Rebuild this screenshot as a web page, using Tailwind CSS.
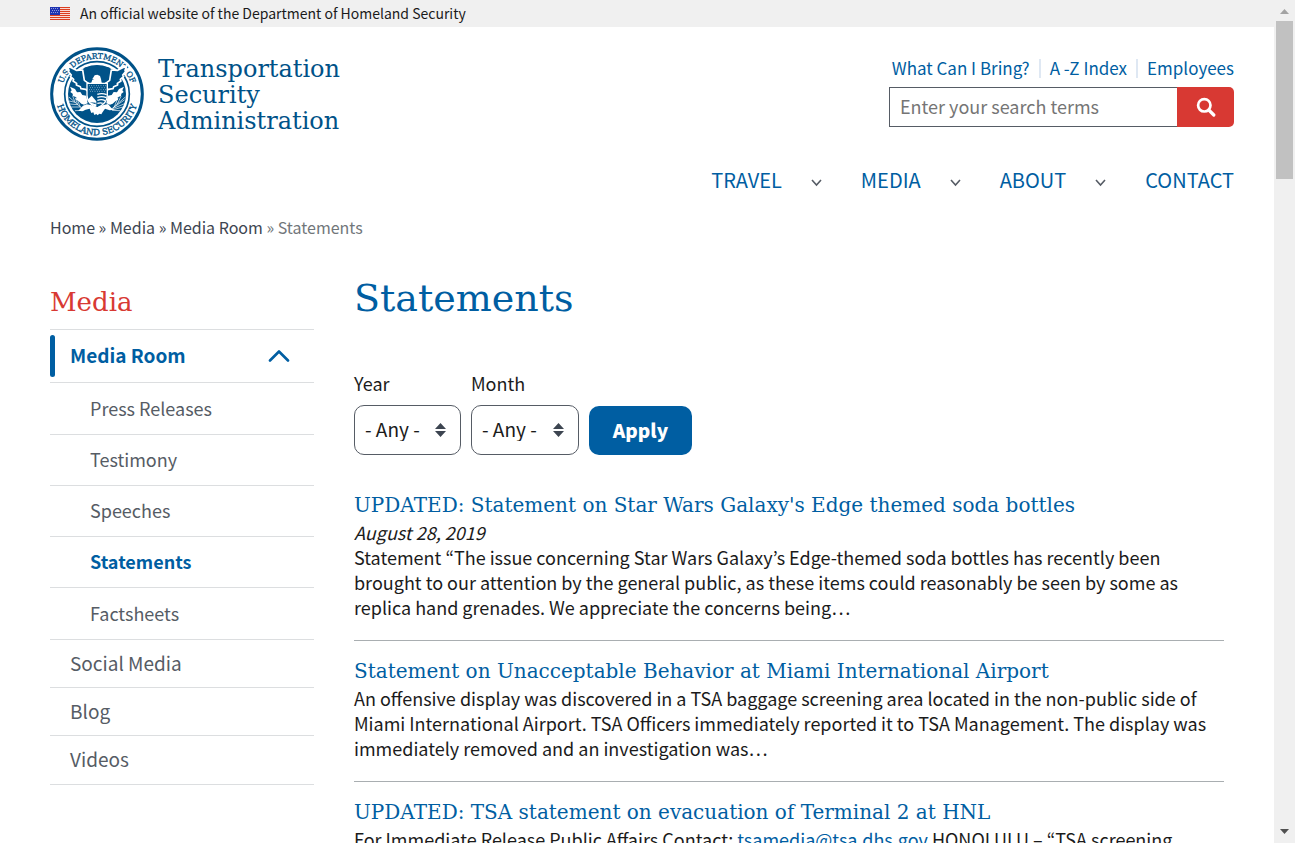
<!DOCTYPE html>
<html lang="en">
<head>
<meta charset="utf-8">
<meta name="viewport" content="width=device-width, initial-scale=1">
<title>Statements | Transportation Security Administration</title>
<script src="https://cdn.jsdelivr.net/npm/@tailwindcss/browser@4"></script>
</head>
<body class="flex h-screen overflow-hidden bg-white font-['Noto_Sans_CJK_KR','Open_Sans',sans-serif] text-[#1b1b1b]">
<div class="min-w-0 flex-1">
  <div class="flex h-[27px] items-center gap-[10px] bg-[#f0f0f0] pl-[50px] text-[14px] leading-[20px]">
    <svg class="h-[13px] w-5" viewBox="0 0 20 13" shape-rendering="crispEdges" aria-hidden="true">
      <path fill="#f9d9d3" d="M0 0h20v13H0z"/>
      <path fill="#db3e1f" d="M0 0h20v1H0zM0 2h20v1H0zM0 4h20v1H0zM0 6h20v1H0zM0 8h20v1H0zM0 10h20v1H0zM0 12h20v1H0z"/>
      <path fill="#1e33b1" d="M0 0h10v8H0z"/>
      <path fill="#8f99dc" d="M1 1h1v1H1zM3 1h1v1H3zM5 1h1v1H5zM7 1h1v1H7zM2 3h1v1H2zM4 3h1v1H4zM6 3h1v1H6zM8 3h1v1H8zM1 5h1v1H1zM3 5h1v1H3zM5 5h1v1H5zM7 5h1v1H7z"/>
    </svg>
    <span class="pb-px">An official website of the Department of Homeland Security</span>
  </div>

  <header class="pt-5 pr-10 pl-[50px]">
    <div class="flex items-start justify-between">
      <a href="#" class="flex items-start gap-[14px] text-[#005288]">
        <svg class="size-[94px]" viewBox="0 0 282 282" role="img" aria-label="Department of Homeland Security seal">
          <defs>
            <path id="arcTop" d="M35 141a106 106 0 0 1 212 0"/>
            <path id="arcBottom" d="M17 141a124 124 0 0 0 248 0"/>
          </defs>
          <circle cx="141" cy="141" r="136" fill="#fff" stroke="#005288" stroke-width="9"/>
          <circle cx="141" cy="141" r="97" fill="none" stroke="#005288" stroke-width="5"/>
          <circle cx="141" cy="141" r="87" fill="#005288"/>
          <g fill="#005288" stroke="#005288" font-family="DejaVu Serif, serif" stroke-width="1">
            <text font-size="23"><textPath href="#arcTop" startOffset="50%" text-anchor="middle">U.S. DEPARTMENT OF</textPath></text>
            <text font-size="26"><textPath href="#arcBottom" startOffset="50%" text-anchor="middle">HOMELAND SECURITY</textPath></text>
          </g>
          <path fill="#005288" stroke="#fff" stroke-width="5" stroke-linejoin="round" d="M52 56l27 14 19-1 5 31 14 10 24 3 24-3 14-10 5-31 19 1 27-14-5 14 2 4-9 10 3 4-10 9 2 5-11 7 1 5-12 5-2 6-14 2-6 5H113l-6-5-14-2-2-6-12-5 1-5-11-7 2-5-10-9 3-4-9-10 2-4z"/>
          <path fill="#005288" d="M103 62q38-12 76 0l-5 36q-8 12-33 12t-33-12z"/>
          <path fill="#fff" d="M60 119l15 7 6 10 10-1 6 9 12 2 4 23-11 4-8-3-8-7-8-5 1-7-10-4-1-7-7-5 4-5zM222 119l-15 7-6 10-10-1-6 9-12 2-4 23 11 4 8-3 8-7 8-5-1-7 10-4 1-7 7-5-4-5z"/>
          <path fill="#fff" d="M129 93l5-8 8-2 8 4 3 9 2 11 13 5h-56l12-5 3-9 6-1-6-1z"/>
          <path fill="#005288" stroke="#fff" stroke-width="4" d="M111 109h61v36q0 25-31 38-30-13-30-38z"/>
          <path stroke="#fff" stroke-width="2" stroke-dasharray="2 5" d="M117 116h52M120 122h48M117 128h52M120 133h48"/>
          <path fill="none" stroke="#fff" stroke-width="4" d="M142 142q14-5 28 1M142 151q14-5 27 1M142 160q14-5 23 1M142 169q10-3 16 0"/>
          <path fill="#fff" d="M112 159l13-13 14 17v17q-20-8-27-21z"/>
          <path fill="#005288" d="M119 166l18 1v5z"/>
          <path fill="#fff" d="M122 174l19 7 20-7 13-3 10 12 9 5-14 2-14-5-7 10-4 7-6-2-5 5-4-4-6 3-3-8-6 2-5-13-12 3-10 5-12-2 14-15 11-4z"/>
          <g fill="none" stroke="#fff" stroke-width="2" stroke-linecap="round">
            <path d="M98 186L58 151M91 180l-26 0M83 173l-24-2M76 166l-19-4M90 178l-6-15M82 170l-6-17M74 163l-6-16M100 190l-24 1"/>
            <path d="M185 186l40-35M190 182l33-23M188 185l36-15M190 188l29-8M193 179l11-26M202 171l11-23M187 190l23 1"/>
          </g>
        </svg>
        <span class="pt-[9px] font-['DejaVu_Serif',serif] text-[24px] leading-[26px]">Transportation<br>Security<br>Administration</span>
      </a>
      <div class="w-[345px] pt-[9px]">
        <ul class="flex justify-end text-[17px] leading-6 whitespace-nowrap text-[#005ea2]">
          <li class="flex items-center">
            <a href="#">What Can I Bring?</a><span class="mx-[9px] h-[19px] w-[2px] bg-[#dfe8f3]"></span>
          </li>
          <li class="flex items-center">
            <a href="#">A -Z Index</a><span class="mx-[9px] h-[19px] w-[2px] bg-[#dfe8f3]"></span>
          </li>
          <li><a href="#">Employees</a></li>
        </ul>
        <form class="mt-[7px] flex h-10" role="search">
          <input type="search" aria-label="Search" placeholder="Enter your search terms" class="min-w-0 flex-1 border border-r-0 border-[#565c65] px-[10px] pb-[2px] text-[18px] leading-6 outline-none placeholder:text-[#757575]">
          <button type="button" aria-label="Search" class="flex w-[57px] items-center justify-center rounded-r-[5px] bg-[#d83933]">
            <svg class="size-5" viewBox="0 0 20 20" fill="none" stroke="#fff" aria-hidden="true"><circle cx="8.300" cy="8.300" r="6.200" stroke-width="2.700"/><path d="M12.800 13l5 5" stroke-width="3.200" stroke-linecap="round"/></svg>
          </button>
        </form>
      </div>
    </div>
    <nav aria-label="Main" class="mt-[25px] flex justify-end gap-[38px] text-[20px] leading-7 text-[#005ea2]">
      <button type="button" class="flex items-center gap-7">TRAVEL<svg class="mt-[3px] h-3 w-[13px]" viewBox="0 0 13 12" fill="none" stroke="#565c65" stroke-width="1.600"><path d="M2 4l4.500 5L11 4"/></svg></button>
      <button type="button" class="flex items-center gap-7">MEDIA<svg class="mt-[3px] h-3 w-[13px]" viewBox="0 0 13 12" fill="none" stroke="#565c65" stroke-width="1.600"><path d="M2 4l4.500 5L11 4"/></svg></button>
      <button type="button" class="flex items-center gap-7">ABOUT<svg class="mt-[3px] h-3 w-[13px]" viewBox="0 0 13 12" fill="none" stroke="#565c65" stroke-width="1.600"><path d="M2 4l4.500 5L11 4"/></svg></button>
      <a href="#">CONTACT</a>
    </nav>
  </header>

  <nav aria-label="Breadcrumb" class="mt-[21px] pl-[50px] text-[16px] leading-6 text-[#3d4551]">
    <a href="#">Home</a> » <a href="#">Media</a> » <a href="#">Media Room</a> <span class="text-[#71767a]">» Statements</span>
  </nav>

  <div class="flex gap-10 pr-[50px] pl-[50px]">
    <aside class="w-[264px] shrink-0 pt-[43px]">
      <h2 class="pb-[7px] font-['DejaVu_Serif',serif] text-[26px] leading-10 text-[#d83933]">Media</h2>
      <ul class="border-t border-[#dcdee0] text-[18px] leading-6 text-[#565c65]">
        <li class="border-b border-[#dcdee0]">
          <button type="button" class="flex h-[52px] w-full items-center text-left text-[19px] font-bold text-[#005ea2]">
            <span class="mr-[15px] h-[42px] w-[5px] rounded-sm bg-[#005ea2]"></span><span class="pb-[2px]">Media Room</span>
            <svg class="mr-6 ml-auto h-3 w-[22px]" viewBox="0 0 22 12" fill="none" stroke="#005ea2" stroke-width="2.600" stroke-linecap="round" stroke-linejoin="round"><path d="M2 10.500l9-9 9 9"/></svg>
          </button>
        </li>
        <li class="border-b border-[#dcdee0] pt-[13px] pb-[14px] pl-10"><a href="#">Press Releases</a></li>
        <li class="border-b border-[#dcdee0] pt-3 pb-[14px] pl-10"><a href="#">Testimony</a></li>
        <li class="border-b border-[#dcdee0] pt-3 pb-[14px] pl-10"><a href="#">Speeches</a></li>
        <li class="border-b border-[#dcdee0] pt-3 pb-[14px] pl-10 font-bold text-[#005ea2]"><a href="#">Statements</a></li>
        <li class="border-b border-[#dcdee0] pt-[13px] pb-[14px] pl-10"><a href="#">Factsheets</a></li>
        <li class="border-b border-[#dcdee0] pt-[11px] pb-3 pl-5 text-[19px]"><a href="#">Social Media</a></li>
        <li class="border-b border-[#dcdee0] pt-[11px] pb-3 pl-5 text-[19px]"><a href="#">Blog</a></li>
        <li class="border-b border-[#dcdee0] pt-[11px] pb-[13px] pl-5 text-[19px]"><a href="#">Videos</a></li>
      </ul>
    </aside>

    <main class="min-w-0 flex-1 pt-[34px]">
      <h1 class="font-['DejaVu_Serif',serif] text-[38px] leading-[50px] text-[#005ea2]">Statements</h1>
      <form class="mt-12 flex items-end gap-[10px] text-[18px] leading-6">
        <div class="w-[107px]">
          <label for="year" class="block pb-[10px]">Year</label>
          <div class="relative">
            <select id="year" class="h-[50px] w-full appearance-none rounded-[10px] border border-[#565c65] bg-white pb-[2px] pl-[10px] text-[19px]"><option>- Any -</option></select>
            <svg class="pointer-events-none absolute top-[18px] right-[15px] h-[14px] w-[11px]" viewBox="0 0 11 14" fill="#3d4551"><path d="M5.500 0L11 6H0zM5.500 14L0 8h11z"/></svg>
          </div>
        </div>
        <div class="w-[108px]">
          <label for="month" class="block pb-[10px]">Month</label>
          <div class="relative">
            <select id="month" class="h-[50px] w-full appearance-none rounded-[10px] border border-[#565c65] bg-white pb-[2px] pl-[10px] text-[19px]"><option>- Any -</option></select>
            <svg class="pointer-events-none absolute top-[18px] right-[15px] h-[14px] w-[11px]" viewBox="0 0 11 14" fill="#3d4551"><path d="M5.500 0L11 6H0zM5.500 14L0 8h11z"/></svg>
          </div>
        </div>
        <button type="button" class="h-[49px] w-[103px] rounded-[10px] bg-[#005ea2] pb-[2px] text-[19px] font-black text-white">Apply</button>
      </form>

      <div class="mt-9 text-[18px] leading-[25px]">
        <article class="border-b border-[#a9aeb1] pb-5">
          <h3 class="font-['DejaVu_Serif',serif] text-[20px] leading-[29px] text-[#005ea2]"><a href="#">UPDATED: Statement on Star Wars Galaxy's Edge themed soda bottles</a></h3>
          <p class="italic">August 28, 2019</p>
          <p>Statement “The issue concerning Star Wars Galaxy’s Edge-themed soda bottles has recently been brought to our attention by the general public, as these items could reasonably be seen by some as replica hand grenades. We appreciate the concerns being…</p>
        </article>
        <article class="border-b border-[#a9aeb1] pt-4 pb-5">
          <h3 class="font-['DejaVu_Serif',serif] text-[20px] leading-[29px] text-[#005ea2]"><a href="#">Statement on Unacceptable Behavior at Miami International Airport</a></h3>
          <p>An offensive display was discovered in a TSA baggage screening area located in the non-public side of Miami International Airport. TSA Officers immediately reported it to TSA Management. The display was immediately removed and an investigation was…</p>
        </article>
        <article class="pt-4">
          <h3 class="font-['DejaVu_Serif',serif] text-[20px] leading-[29px] text-[#005ea2]"><a href="#">UPDATED: TSA statement on evacuation of Terminal 2 at HNL</a></h3>
          <p>For Immediate Release Public Affairs Contact: <a href="#" class="text-[#005ea2] underline">tsamedia@tsa.dhs.gov</a> HONOLULU – “TSA screening</p>
        </article>
      </div>
    </main>
  </div>
</div>

<div class="flex h-full w-[21px] shrink-0 flex-col items-center bg-[#f0f0f0] pt-[9px] pb-[9px]" aria-hidden="true">
  <svg class="h-[5px] w-[9px]" viewBox="0 0 9 5"><path fill="#a3a3a3" d="M4.500 0L9 5H0z"/></svg>
  <div class="mt-[7px] h-[158px] w-[17px] bg-[#c1c1c1]"></div>
  <svg class="mt-auto h-[5px] w-[9px]" viewBox="0 0 9 5"><path fill="#505050" d="M4.500 5L0 0h9z"/></svg>
</div>
</body>
</html>
